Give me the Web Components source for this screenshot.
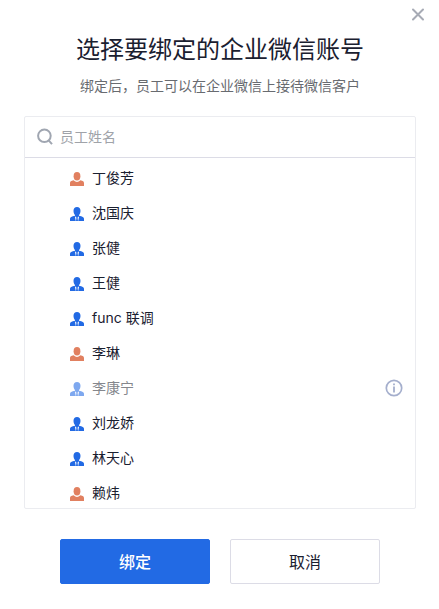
<!DOCTYPE html>
<html lang="zh-CN">
<head>
<meta charset="utf-8">
<meta name="viewport" content="width=device-width, initial-scale=1">
<title>选择要绑定的企业微信账号</title>
<style>
body { margin: 0; background: #fff; color: #1a2030; font: 14px/20px Inter, "Noto Sans CJK SC", sans-serif; }
</style>
</head>
<body>
<bind-dialog>
  <span slot="title">选择要绑定的企业微信账号</span>
  <span slot="description">绑定后，员工可以在企业微信上接待微信客户</span>
  <staff-picker>
    <staff-item tone="coral">丁俊芳</staff-item>
    <staff-item>沈国庆</staff-item>
    <staff-item>张健</staff-item>
    <staff-item>王健</staff-item>
    <staff-item>func 联调</staff-item>
    <staff-item tone="coral">李琳</staff-item>
    <staff-item disabled>李康宁</staff-item>
    <staff-item>刘龙娇</staff-item>
    <staff-item>林天心</staff-item>
    <staff-item tone="coral">赖炜</staff-item>
  </staff-picker>
  <action-button slot="actions" primary>绑定</action-button>
  <action-button slot="actions">取消</action-button>
</bind-dialog>

<template id="dialog-template">
  <style>
    :host { display: block; padding: 8px 23px 24px 24px; }
    header { display: flex; justify-content: flex-end; margin-right: -9px; height: 24px; }
    .close { display: block; width: 14px; height: 14px; padding: 0; border: 0; background: none; cursor: pointer; }
    svg { display: block; }
    h1 { margin: 0; font-size: 24px; line-height: 36px; font-weight: 400; text-align: center; }
    p { margin: 8px 0 20px; text-align: center; color: #686b70; }
    footer { display: flex; justify-content: center; gap: 20px; margin-top: 30px; }
  </style>
  <header>
    <button class="close" type="button" aria-label="关闭">
      <svg width="14" height="14" viewBox="0 0 14 14" fill="none" stroke="#a7abb5" stroke-width="2" stroke-linecap="round"><path d="M2 1.5 12 11.5M12 1.5 2 11.5"/></svg>
    </button>
  </header>
  <h1><slot name="title"></slot></h1>
  <p><slot name="description"></slot></p>
  <slot></slot>
  <footer><slot name="actions"></slot></footer>
</template>

<template id="picker-template">
  <style>
    :host { display: block; border: 1px solid #ebecf0; border-radius: 2px; }
    .search { display: flex; align-items: center; gap: 7px; height: 40px; padding: 0 12px; border-bottom: 1px solid #dcdce6; }
    svg { display: block; flex: none; }
    input { flex: 1; min-width: 0; height: 24px; padding: 0 0 2px; box-sizing: border-box; border: 0; outline: 0; background: none; color: inherit; font: inherit; }
    input::placeholder { color: #a0a3a9; opacity: 1; }
    .list { max-height: 350px; padding-top: 2px; box-sizing: border-box; overflow-y: auto; scrollbar-width: none; }
  </style>
  <label class="search">
    <svg width="16" height="18" viewBox="0 0 16 18" fill="none" stroke="#a0a6b1" stroke-width="2"><circle cx="7.4" cy="7.8" r="6.3"/><path d="m11.4 12.2 3.6 4"/></svg>
    <input type="text" placeholder="员工姓名" aria-label="员工姓名">
  </label>
  <div class="list" role="list"><slot></slot></div>
</template>

<template id="item-template">
  <style>
    :host { display: flex; align-items: center; height: 35px; padding: 0 12px 0 45px; --tone: #226ae4; }
    :host([tone="coral"]) { --tone: #e18060; }
    .person { flex: 1; display: flex; align-items: center; gap: 8px; height: 35px; padding: 0; border: 0; background: none; color: inherit; font: inherit; text-align: left; cursor: pointer; }
    .person:disabled { color: #85878d; cursor: default; }
    .avatar { display: block; flex: none; color: var(--tone); margin-top: 2px; }
    .person:disabled .avatar { opacity: .58; }
    .info { display: none; }
    :host([tone]) .suit { display: none; }
    :host(:not([tone])) .shirt { display: none; }
    :host([disabled]) .info { display: block; }
    .info { width: 18px; height: 18px; padding: 0; border: 0; background: none; cursor: pointer; }
    .info svg { display: block; }
  </style>
  <button class="person" type="button">
    <svg class="avatar" width="14" height="14" viewBox="0 0 14 14" fill="currentColor" aria-hidden="true">
      <g class="shirt"><ellipse cx="7" cy="4.2" rx="3.4" ry="4.2"/><path d="M0 14v-2.7C0 9.5 1 8.8 3.6 8.3Q7 11.8 10.4 8.3C13 8.8 14 9.5 14 11.3V14Z"/></g>
      <g class="suit"><path d="M3.5 3.8C3.5 1.5 4.8 0 7 0s3.5 1.5 3.5 3.8c0 1.8-.6 3.2-1.5 4.2v.7c3.5.7 5 1.3 5 3V14H0v-2.3c0-1.7 1.5-2.3 5-3V8c-.9-1-1.5-2.4-1.5-4.2Z"/><path d="M4.9 9.4 5.8 14h2.4l.9-4.6L7 10.3Z" fill="#fff"/><path d="m6.2 10 .8-.5.8.5-.2 1 .4 3H6l.4-3Z"/></g>
    </svg>
    <span><slot></slot></span>
  </button>
  <button class="info" type="button" aria-label="账号说明">
    <svg width="18" height="18" viewBox="0 0 18 18" fill="none" stroke="#a5afcd"><circle cx="9" cy="9" r="7.7" stroke-width="1.7"/><path d="M9 4.5v1.7M9 7.5v6" stroke-width="1.8"/></svg>
  </button>
</template>

<template id="action-template">
  <style>
    :host { display: block; flex: 0 1 150px; }
    button { display: block; width: 100%; height: 45px; padding: 0; border: 1px solid #dcdce6; border-radius: 2px; background: #fff; color: inherit; font: inherit; font-size: 16px; font-weight: 400; line-height: 24px; cursor: pointer; }
    :host([primary]) button { border-color: #226ae4; background: #226ae4; color: #fff; font-weight: 500; }
  </style>
  <button type="button"><slot></slot></button>
</template>

<script>
class TemplateElement extends HTMLElement {
  constructor() {
    super();
    const template = document.getElementById(this.constructor.templateId);
    this.attachShadow({ mode: "open" }).append(template.content.cloneNode(true));
  }
}
class BindDialog extends TemplateElement {
  static templateId = "dialog-template";
  connectedCallback() { this.setAttribute("role", "dialog"); }
}
class StaffPicker extends TemplateElement {
  static templateId = "picker-template";
  connectedCallback() {
    this.shadowRoot.querySelector("input").addEventListener("input", (event) => {
      const query = event.target.value.trim();
      for (const item of this.children) item.style.display = item.textContent.includes(query) ? "" : "none";
    });
  }
}
class StaffItem extends TemplateElement {
  static templateId = "item-template";
  connectedCallback() {
    this.setAttribute("role", "listitem");
    this.shadowRoot.querySelector(".person").disabled = this.hasAttribute("disabled");
  }
}
class ActionButton extends TemplateElement {
  static templateId = "action-template";
}
customElements.define("bind-dialog", BindDialog);
customElements.define("staff-picker", StaffPicker);
customElements.define("staff-item", StaffItem);
customElements.define("action-button", ActionButton);
</script>
</body>
</html>
